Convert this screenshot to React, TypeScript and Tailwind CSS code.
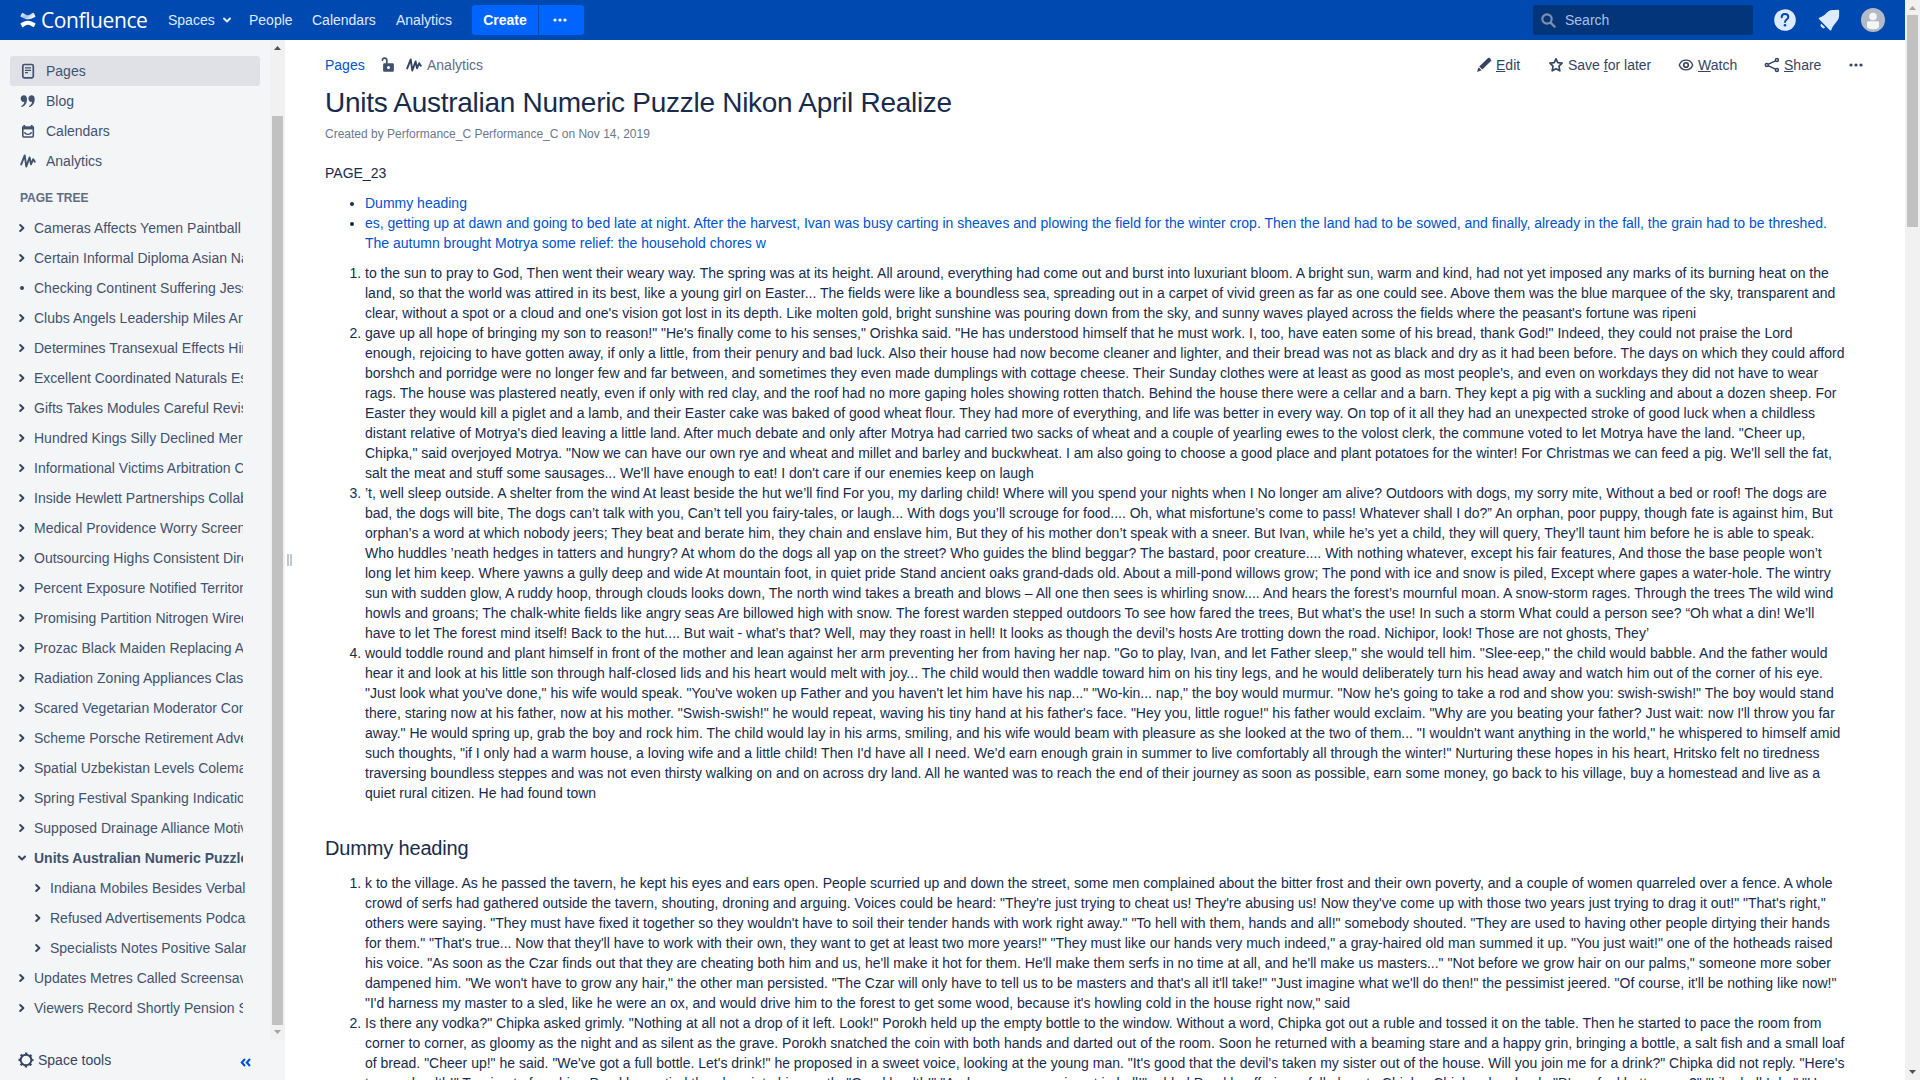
import React from "react";

type NodeItem = { label: string; kind?: "dot" | "open"; depth?: number };

const tree: NodeItem[] = [
  { label: "Cameras Affects Yemen Paintball" },
  { label: "Certain Informal Diploma Asian Naples" },
  { label: "Checking Continent Suffering Jessica", kind: "dot" },
  { label: "Clubs Angels Leadership Miles Announce" },
  { label: "Determines Transexual Effects Hindu" },
  { label: "Excellent Coordinated Naturals Essays" },
  { label: "Gifts Takes Modules Careful Revision" },
  { label: "Hundred Kings Silly Declined Merchant" },
  { label: "Informational Victims Arbitration Clone" },
  { label: "Inside Hewlett Partnerships Collabs" },
  { label: "Medical Providence Worry Screening" },
  { label: "Outsourcing Highs Consistent Directly" },
  { label: "Percent Exposure Notified Territory" },
  { label: "Promising Partition Nitrogen Wired" },
  { label: "Prozac Black Maiden Replacing Arts" },
  { label: "Radiation Zoning Appliances Classic" },
  { label: "Scared Vegetarian Moderator Connect" },
  { label: "Scheme Porsche Retirement Advent" },
  { label: "Spatial Uzbekistan Levels Coleman" },
  { label: "Spring Festival Spanking Indication" },
  { label: "Supposed Drainage Alliance Motive" },
  { label: "Units Australian Numeric Puzzle Nikon", kind: "open" },
  { label: "Indiana Mobiles Besides Verbal", depth: 1 },
  { label: "Refused Advertisements Podcast", depth: 1 },
  { label: "Specialists Notes Positive Salary", depth: 1 },
  { label: "Updates Metres Called Screensaver" },
  { label: "Viewers Record Shortly Pension Sun" },
];

const firstList = [
  `to the sun to pray to God, Then went their weary way. The spring was at its height. All around, everything had come out and burst into luxuriant bloom. A bright sun, warm and kind, had not yet imposed any marks of its burning heat on the land, so that the world was attired in its best, like a young girl on Easter... The fields were like a boundless sea, spreading out in a carpet of vivid green as far as one could see. Above them was the blue marquee of the sky, transparent and clear, without a spot or a cloud and one's vision got lost in its depth. Like molten gold, bright sunshine was pouring down from the sky, and sunny waves played across the fields where the peasant's fortune was ripeni`,
  `gave up all hope of bringing my son to reason!" "He's finally come to his senses," Orishka said. "He has understood himself that he must work. I, too, have eaten some of his bread, thank God!" Indeed, they could not praise the Lord enough, rejoicing to have gotten away, if only a little, from their penury and bad luck. Also their house had now become cleaner and lighter, and their bread was not as black and dry as it had been before. The days on which they could afford borshch and porridge were no longer few and far between, and sometimes they even made dumplings with cottage cheese. Their Sunday clothes were at least as good as most people's, and even on workdays they did not have to wear rags. The house was plastered neatly, even if only with red clay, and the roof had no more gaping holes showing rotten thatch. Behind the house there were a cellar and a barn. They kept a pig with a suckling and about a dozen sheep. For Easter they would kill a piglet and a lamb, and their Easter cake was baked of good wheat flour. They had more of everything, and life was better in every way. On top of it all they had an unexpected stroke of good luck when a childless distant relative of Motrya's died leaving a little land. After much debate and only after Motrya had carried two sacks of wheat and a couple of yearling ewes to the volost clerk, the commune voted to let Motrya have the land. "Cheer up, Chipka," said overjoyed Motrya. "Now we can have our own rye and wheat and millet and barley and buckwheat. I am also going to choose a good place and plant potatoes for the winter! For Christmas we can feed a pig. We'll sell the fat, salt the meat and stuff some sausages... We'll have enough to eat! I don't care if our enemies keep on laugh`,
  `’t, well sleep outside. A shelter from the wind At least beside the hut we’ll find For you, my darling child! Where will you spend your nights when I No longer am alive? Outdoors with dogs, my sorry mite, Without a bed or roof! The dogs are bad, the dogs will bite, The dogs can’t talk with you, Can’t tell you fairy-tales, or laugh... With dogs you’ll scrouge for food.... Oh, what misfortune’s come to pass! Whatever shall I do?” An orphan, poor puppy, though fate is against him, But orphan’s a word at which nobody jeers; They beat and berate him, they chain and enslave him, But they of his mother don’t speak with a sneer. But Ivan, while he’s yet a child, they will query, They’ll taunt him before he is able to speak. Who huddles ’neath hedges in tatters and hungry? At whom do the dogs all yap on the street? Who guides the blind beggar? The bastard, poor creature.... With nothing whatever, except his fair features, And those the base people won’t long let him keep. Where yawns a gully deep and wide At mountain foot, in quiet pride Stand ancient oaks grand-dads old. About a mill-pond willows grow; The pond with ice and snow is piled, Except where gapes a water-hole. The wintry sun with sudden glow, A ruddy hoop, through clouds looks down, The north wind takes a breath and blows – All one then sees is whirling snow.... And hears the forest’s mournful moan. A snow-storm rages. Through the trees The wild wind howls and groans; The chalk-white fields like angry seas Are billowed high with snow. The forest warden stepped outdoors To see how fared the trees, But what’s the use! In such a storm What could a person see? “Oh what a din! We’ll have to let The forest mind itself! Back to the hut.... But wait - what’s that? Well, may they roast in hell! It looks as though the devil’s hosts Are trotting down the road. Nichipor, look! Those are not ghosts, They’`,
  `would toddle round and plant himself in front of the mother and lean against her arm preventing her from having her nap. "Go to play, Ivan, and let Father sleep," she would tell him. "Slee-eep," the child would babble. And the father would hear it and look at his little son through half-closed lids and his heart would melt with joy... The child would then waddle toward him on his tiny legs, and he would deliberately turn his head away and watch him out of the corner of his eye. "Just look what you've done," his wife would speak. "You've woken up Father and you haven't let him have his nap..." "Wo-kin... nap," the boy would murmur. "Now he's going to take a rod and show you: swish-swish!" The boy would stand there, staring now at his father, now at his mother. "Swish-swish!" he would repeat, waving his tiny hand at his father's face. "Hey you, little rogue!" his father would exclaim. "Why are you beating your father? Just wait: now I'll throw you far away." He would spring up, grab the boy and rock him. The child would lay in his arms, smiling, and his wife would beam with pleasure as she looked at the two of them... "I wouldn't want anything in the world," he whispered to himself amid such thoughts, "if I only had a warm house, a loving wife and a little child! Then I'd have all I need. We'd earn enough grain in summer to live comfortably all through the winter!" Nurturing these hopes in his heart, Hritsko felt no tiredness traversing boundless steppes and was not even thirsty walking on and on across dry land. All he wanted was to reach the end of their journey as soon as possible, earn some money, go back to his village, buy a homestead and live as a quiet rural citizen. He had found town`,
];

const secondList = [
  `k to the village. As he passed the tavern, he kept his eyes and ears open. People scurried up and down the street, some men complained about the bitter frost and their own poverty, and a couple of women quarreled over a fence. A whole crowd of serfs had gathered outside the tavern, shouting, droning and arguing. Voices could be heard: "They're just trying to cheat us! They're abusing us! Now they've come up with those two years just trying to drag it out!" "That's right," others were saying. "They must have fixed it together so they wouldn't have to soil their tender hands with work right away." "To hell with them, hands and all!" somebody shouted. "They are used to having other people dirtying their hands for them." "That's true... Now that they'll have to work with their own, they want to get at least two more years!" "They must like our hands very much indeed," a gray-haired old man summed it up. "You just wait!" one of the hotheads raised his voice. "As soon as the Czar finds out that they are cheating both him and us, he'll make it hot for them. He'll make them serfs in no time at all, and he'll make us masters..." "Not before we grow hair on our palms," someone more sober dampened him. "We won't have to grow any hair," the other man persisted. "The Czar will only have to tell us to be masters and that's all it'll take!" "Just imagine what we'll do then!" the pessimist jeered. "Of course, it'll be nothing like now!" "I'd harness my master to a sled, like he were an ox, and would drive him to the forest to get some wood, because it's howling cold in the house right now," said`,
  `Is there any vodka?" Chipka asked grimly. "Nothing at all not a drop of it left. Look!" Porokh held up the empty bottle to the window. Without a word, Chipka got out a ruble and tossed it on the table. Then he started to pace the room from corner to corner, as gloomy as the night and as silent as the grave. Porokh snatched the coin with both hands and darted out of the room. Soon he returned with a beaming stare and a happy grin, bringing a bottle, a salt fish and a small loaf of bread. "Cheer up!" he said. "We've got a full bottle. Let's drink!" he proposed in a sweet voice, looking at the young man. "It's good that the devil's taken my sister out of the house. Will you join me for a drink?" Chipka did not reply. "Here's to your health!" Turning to face him, Porokh emptied the glass into his mouth. "Good health!" "And now our woes is not in hell!" added Porokh, offering a full glass to Chipka. Chipka also drank. "D'you feel better now?" "Like hell I do." "Have`,
];

function PulseIcon({ className = "" }: { className?: string }) {
  return (
    <svg width="16" height="16" viewBox="0 0 16 16" className={className} fill="none" stroke="currentColor" strokeWidth="1.9" strokeLinecap="round" strokeLinejoin="round">
      <path d="M1.200 11.400 4.700 2.400 6.300 13.500 9.600 4.400 11 11.400 13.200 6.200 14.800 8.800" />
    </svg>
  );
}

function Logo() {
  return (
    <svg width="16" height="16" viewBox="0 0 16 16" className="shrink-0">
      <defs>
        <linearGradient id="lg1" x1="0" y1="0" x2="1" y2="0.4">
          <stop offset="0" stopColor="#fff" stopOpacity="0.95" />
          <stop offset="0.5" stopColor="#fff" stopOpacity="0.65" />
          <stop offset="1" stopColor="#fff" />
        </linearGradient>
      </defs>
      <path fill="url(#lg1)" d="M15.4 4.2 13.8 1c-.1-.3-.4-.3-.7-.2-2.3 1.1-3 2.400-5.100 2.400C5.800 3.200 4.300 1.500 2.500 1c-.3-.1-.5 0-.6.2L.5 4c-.1.300 0 .5.300.7 3 1.400 4.600 2.600 7.200 2.600 3 0 4.700-1.200 7.200-2.500.2-.100.300-.3.200-.6z" />
      <path fill="#fff" d="M.6 11.800 2.200 15c.1.300.400.300.700.200 2.300-1.100 3-2.400 5.100-2.400 2.200 0 3.700 1.700 5.500 2.200.3.100.5 0 .6-.2l1.400-2.800c.1-.3 0-.5-.3-.7C12.200 9.900 10.600 8.700 8 8.700c-3 0-4.700 1.200-7.200 2.500-.2.100-.3.300-.2.600z" />
    </svg>
  );
}

function Chevron({ open }: { open?: boolean }) {
  return (
    <svg width="10" height="10" viewBox="0 0 10 10" fill="none" stroke="#344563" strokeWidth="2" strokeLinecap="round" strokeLinejoin="round">
      {open ? <path d="M2 3.500 5 6.500 8 3.500" /> : <path d="M3.200 2 6.400 5 3.200 8" />}
    </svg>
  );
}

function Dots({ className = "" }: { className?: string }) {
  return (
    <svg width="14" height="4" viewBox="0 0 14 4" fill="currentColor" className={className}>
      <circle cx="2" cy="2" r="1.600" />
      <circle cx="7" cy="2" r="1.600" />
      <circle cx="12" cy="2" r="1.600" />
    </svg>
  );
}

function Header() {
  return (
    <header className="flex h-10 shrink-0 items-center bg-[#0049b0] text-sm text-[#deebff]">
      <div className="flex w-[148px] items-center gap-[5px] pl-5">
        <Logo />
        <span className="whitespace-nowrap font-['Open_Sans','Noto_Sans',sans-serif] text-[21px] leading-[38px] tracking-[-0.4px] text-white">Confluence</span>
      </div>
      <nav className="flex flex-1 items-center">
        <span className="ml-5 w-[47px]">Spaces</span>
        <svg width="10" height="10" viewBox="0 0 10 10" fill="none" stroke="currentColor" strokeWidth="2" strokeLinecap="round" strokeLinejoin="round" className="ml-[7px]">
          <path d="M2 3.500 5 6.500 8 3.500" />
        </svg>
        <span className="ml-[17px] w-11">People</span>
        <span className="ml-[19px] w-16">Calendars</span>
        <span className="ml-5 w-14">Analytics</span>
        <span className="ml-5 flex h-[30px] w-[66px] items-center justify-center rounded-l-[3px] bg-[#0065ff] font-bold text-white">Create</span>
        <span className="ml-px flex h-[30px] w-[45px] items-center justify-center rounded-r-[3px] bg-[#0065ff] pr-[3px] text-white">
          <Dots />
        </span>
      </nav>
      <div className="flex h-[30px] w-[220px] items-center gap-[9px] rounded-[3px] bg-[#03357a] pl-2 text-[#a9c1e8]">
        <svg width="15" height="15" viewBox="0 0 15 15" fill="none" stroke="#7f90ad" strokeWidth="2.200" strokeLinecap="round">
          <circle cx="6" cy="6" r="4.700" />
          <path d="m9.600 9.600 4 4" />
        </svg>
        Search
      </div>
      <div className="flex w-[152px] items-center pl-[21px]">
        <svg width="22" height="22" viewBox="0 0 22 22">
          <circle cx="11" cy="11" r="10.800" fill="#deebff" />
          <path d="M7.700 8.200c0-2 1.400-3.200 3.300-3.200s3.300 1.200 3.300 3c0 2.400-3.300 2.500-3.300 5" fill="none" stroke="#0049b0" strokeWidth="2" strokeLinecap="round" />
          <circle cx="11" cy="16.300" r="1.300" fill="#0049b0" />
        </svg>
        <svg width="22" height="22" viewBox="0 0 22 22" className="ml-[22px]" fill="#deebff">
          <path d="M1.200 8.800C5.500 7.400 7.800 4.500 10.500 2.200 13 .3 16.500 1.200 19.500.7c1-.2 1.800.5 1.700 1.500-.3 2.800.5 5.300-.9 8-2 3.500-5.600 6.200-7 10.700-.3.900-.8.900-1.400.3L1 9.900c-.4-.4-.3-.9.2-1.100z" />
          <path d="M3.300 14.800 7.200 18.600a2.400 2.400 0 0 1-3.500-.3 2.400 2.400 0 0 1-.4-3.500z" />
        </svg>
        <svg width="24" height="24" viewBox="0 0 24 24" className="ml-[21px]">
          <circle cx="12" cy="12" r="12" fill="#b3bac5" />
          <circle cx="12" cy="8.500" r="3.800" fill="#f4f5f7" />
          <path d="M6 14.700c0-1 .5-1.500 1.500-1.500h9c1 0 1.500.5 1.500 1.500v4c0 1.600-3 2.500-6 2.500s-6-.9-6-2.500z" fill="#f4f5f7" />
        </svg>
      </div>
    </header>
  );
}

function NavRow({ label, active, children }: { label: string; active?: boolean; children: React.ReactNode }) {
  return (
    <div className={active ? "ml-2.5 flex h-[30px] w-[250px] items-center rounded-[3px] bg-[#dfe1e6] pl-2.5" : "ml-2.5 flex h-[30px] w-[250px] items-center pl-2.5"}>
      <span className="flex w-[26px] items-center">{children}</span>
      {label}
    </div>
  );
}

function Sidebar() {
  return (
    <aside className="flex w-[285px] shrink-0 flex-col bg-[#f4f5f7] text-sm text-[#42526e]">
      <div className="flex h-[1000px]">
        <div className="w-[270px] pt-4">
          <NavRow label="Pages" active>
            <svg width="16" height="16" viewBox="0 0 16 16" fill="none" stroke="currentColor">
              <rect x="2.800" y="1.500" width="10.500" height="13.300" rx="1.500" strokeWidth="1.700" />
              <path d="M5 4.900h6M5 7.300h6M5 9.700h3" strokeWidth="1.300" />
            </svg>
          </NavRow>
          <NavRow label="Blog">
            <svg width="16" height="16" viewBox="0 0 16 16" fill="currentColor">
              <path d="M3.800 2.200C6 2.200 7 3.800 7 6.200c0 4-2.100 6.800-5.100 7.700-.7.200-.9-.5-.4-.9 1.900-1.200 2.700-2.500 2.900-4.200C2.300 9.300.7 7.700.7 5.500c0-1.900 1.300-3.300 3.100-3.300zM11.500 2.200c2.200 0 3.200 1.600 3.200 4 0 4-2.100 6.800-5.100 7.700-.7.200-.9-.5-.4-.9 1.900-1.200 2.700-2.500 2.900-4.200-2.100.5-3.700-1.100-3.700-3.300 0-1.900 1.300-3.300 3.100-3.300z" />
            </svg>
          </NavRow>
          <NavRow label="Calendars">
            <svg width="16" height="16" viewBox="0 0 16 16" fill="none" stroke="currentColor">
              <path d="M2.800 4.500h10.500v8.500a1 1 0 0 1-1 1H3.800a1 1 0 0 1-1-1z" strokeWidth="1.600" />
              <path d="M2.100 4.900h11.800" strokeWidth="3" />
              <path d="M4.300 2v2M11.700 2v2" strokeWidth="1.800" />
              <path d="M4.600 9.200c.6 2.900 6.200 2.900 6.800 0" strokeWidth="1.400" />
            </svg>
          </NavRow>
          <NavRow label="Analytics">
            <PulseIcon />
          </NavRow>
          <div className="flex h-[37px] items-center pl-5 pt-1.5 text-xs font-bold text-[#5e6c84]">PAGE TREE</div>
          <div>
            {tree.map((n) => (
              <div key={n.label} className={n.depth ? "flex h-[30px] w-[246px] items-center overflow-hidden whitespace-nowrap pl-[33px]" : "flex h-[30px] w-[243px] items-center overflow-hidden whitespace-nowrap pl-[17px]"}>
                <span className="flex w-[17px] shrink-0 items-center">
                  {n.kind === "dot" ? <span className="ml-[3px] h-1 w-1 rounded-full bg-[#344563]" /> : <Chevron open={n.kind === "open"} />}
                </span>
                <span className={n.kind === "open" ? "font-bold" : ""}>{n.label}</span>
              </div>
            ))}
          </div>
        </div>
        <div className="flex w-[15px] flex-col items-center bg-[#f1f1f1]">
          <svg width="7" height="4" viewBox="0 0 7 4" className="mt-1.5" fill="#505050"><path d="M3.500 0 7 4H0z" /></svg>
          <div className="mt-[66px] h-[909px] w-[11px] bg-[#c1c1c1]" />
          <svg width="7" height="4" viewBox="0 0 7 4" className="mt-[5px]" fill="#a3a3a3"><path d="M3.500 4 7 0H0z" /></svg>
        </div>
      </div>
      <div className="flex h-10 items-center pl-[18px] text-[#344563]">
        <svg width="16" height="16" viewBox="0 0 16 16" fill="none" stroke="currentColor">
          <circle cx="8" cy="8" r="5.300" strokeWidth="1.900" />
          <circle cx="8" cy="8" r="6.600" strokeWidth="1.800" strokeDasharray="2.400 2.784" strokeDashoffset="1.200" />
        </svg>
        <span className="ml-1">Space tools</span>
        <svg width="11" height="9" viewBox="0 0 11 9" className="ml-auto mr-[34px] mt-1" fill="none" stroke="#0052cc" strokeWidth="2.100">
          <path d="M5 1 1.800 4.500 5 8M10 1 6.800 4.500 10 8" />
        </svg>
      </div>
    </aside>
  );
}

function Toolbar() {
  return (
    <div className="flex h-[50px] items-center whitespace-nowrap text-sm text-[#344563]">
      <span className="w-[55px] text-[#0052cc]">Pages</span>
      <svg width="16" height="16" viewBox="0 0 16 16" className="text-[#42526e]">
        <path d="M3.200 3.800a2.200 2.200 0 0 1 4.400.3V7" transform="translate(-.8 -.6)" fill="none" stroke="currentColor" strokeWidth="1.700" strokeLinecap="round" />
        <path fill="currentColor" fillRule="evenodd" d="M4.300 6.300h8.400a1.200 1.200 0 0 1 1.200 1.200v6a1.200 1.200 0 0 1-1.200 1.200H4.300a1.200 1.200 0 0 1-1.200-1.200v-6a1.200 1.200 0 0 1 1.200-1.200zM8.500 9a1.500 1.500 0 1 0 0 3 1.500 1.500 0 0 0 0-3z" />
      </svg>
      <PulseIcon className="ml-[10px] text-[#344563]" />
      <span className="ml-[5px] text-[#5e6c84]">Analytics</span>
      <div className="ml-auto flex items-center">
        <svg width="16" height="16" viewBox="0 0 16 16" fill="currentColor">
          <path d="m11 1.900 1-.9c.5-.5 1.200-.4 1.700.1l1.300 1.300c.5.500.5 1.200 0 1.700L6.300 12.400 3.300 9.400zM2.600 10.300l3 3-3.900 1.400c-.4.100-.6-.1-.5-.5z" />
        </svg>
        <span className="ml-1 w-[24px]"><u>E</u>dit</span>
        <svg width="16" height="16" viewBox="0 0 16 16" className="ml-7" fill="none" stroke="currentColor" strokeWidth="1.700" strokeLinejoin="round">
          <path d="m8 1.800 1.800 3.900 4.300.5-3.100 2.900.8 4.700L8 11.700l-3.800 2.100.8-4.700-3.100-2.900 4.300-.5z" />
        </svg>
        <span className="ml-1 w-[83px]">Save <u>f</u>or later</span>
        <svg width="16" height="16" viewBox="0 0 16 16" className="ml-[27px]" fill="none" stroke="currentColor">
          <path d="M1.300 8C2.400 5 5 3.100 8 3.100S13.600 5 14.700 8c-1.100 3-3.700 4.900-6.700 4.900S2.400 11 1.300 8z" strokeWidth="1.400" />
          <circle cx="8" cy="8" r="2.300" strokeWidth="1.600" />
        </svg>
        <span className="ml-1 w-[40px]"><u>W</u>atch</span>
        <svg width="16" height="16" viewBox="0 0 16 16" className="ml-[26px]" fill="none" stroke="currentColor" strokeWidth="1.500">
          <path d="m4 7.400 7.400-3.600M4 8.600l7.400 3.600" />
          <circle cx="2.800" cy="8" r="1.500" />
          <circle cx="12.900" cy="3.100" r="1.500" />
          <circle cx="12.900" cy="12.900" r="1.500" />
        </svg>
        <span className="ml-1 w-[37px]"><u>S</u>hare</span>
        <Dots className="ml-[28px] mr-[2px]" />
      </div>
    </div>
  );
}

function Paragraphs({ items }: { items: string[] }) {
  return (
    <ol className="mt-2.5 list-decimal pl-10">
      {items.map((t, i) => (
        <li key={i}>{t}</li>
      ))}
    </ol>
  );
}

export default function App() {
  return (
    <div className="flex h-[1080px] w-[1920px] overflow-hidden bg-white font-['Liberation_Sans',Arial,sans-serif]">
      <div className="flex w-[1905px] flex-col">
        <Header />
        <div className="flex h-[1040px]">
          <Sidebar />
          <div className="flex w-2 items-center pl-0.5">
            <div className="flex h-3 gap-px">
              <span className="w-[2px] bg-[#c1c7d0]" />
              <span className="w-[2px] bg-[#c1c7d0]" />
            </div>
          </div>
          <main className="h-[1040px] w-[1612px] overflow-hidden pl-8 pr-10 text-sm leading-5 text-[#172b4d]">
            <Toolbar />
            <article className="-mt-[2px] pr-5">
              <h1 className="text-[28px] leading-[30px] tracking-[-0.28px]">Units Australian Numeric Puzzle Nikon April Realize</h1>
              <p className="mt-1.5 text-xs leading-5 text-[#6b778c]">Created by Performance_C Performance_C on Nov 14, 2019</p>
              <p className="mt-[19px]">PAGE_23</p>
              <ul className="mt-2.5 list-disc pl-10">
                <li><span className="text-[#0052cc]">Dummy heading</span></li>
                <li><span className="text-[#0052cc]">es, getting up at dawn and going to bed late at night. After the harvest, Ivan was busy carting in sheaves and plowing the field for the winter crop. Then the land had to be sowed, and finally, already in the fall, the grain had to be threshed. The autumn brought Motrya some relief: the household chores w</span></li>
              </ul>
              <Paragraphs items={firstList} />
              <h2 className="mt-[30px] text-xl leading-[30px] tracking-[-0.16px]">Dummy heading</h2>
              <Paragraphs items={secondList} />
            </article>
          </main>
        </div>
      </div>
      <div className="flex w-[15px] flex-col items-center bg-[#f1f1f1]">
        <svg width="7" height="4" viewBox="0 0 7 4" className="mt-1.5" fill="#a3a3a3"><path d="M3.500 0 7 4H0z" /></svg>
        <div className="mt-[5px] h-[212px] w-[11px] bg-[#c1c1c1]" />
        <svg width="7" height="4" viewBox="0 0 7 4" className="mb-1.5 mt-auto" fill="#505050"><path d="M3.500 4 7 0H0z" /></svg>
      </div>
    </div>
  );
}
